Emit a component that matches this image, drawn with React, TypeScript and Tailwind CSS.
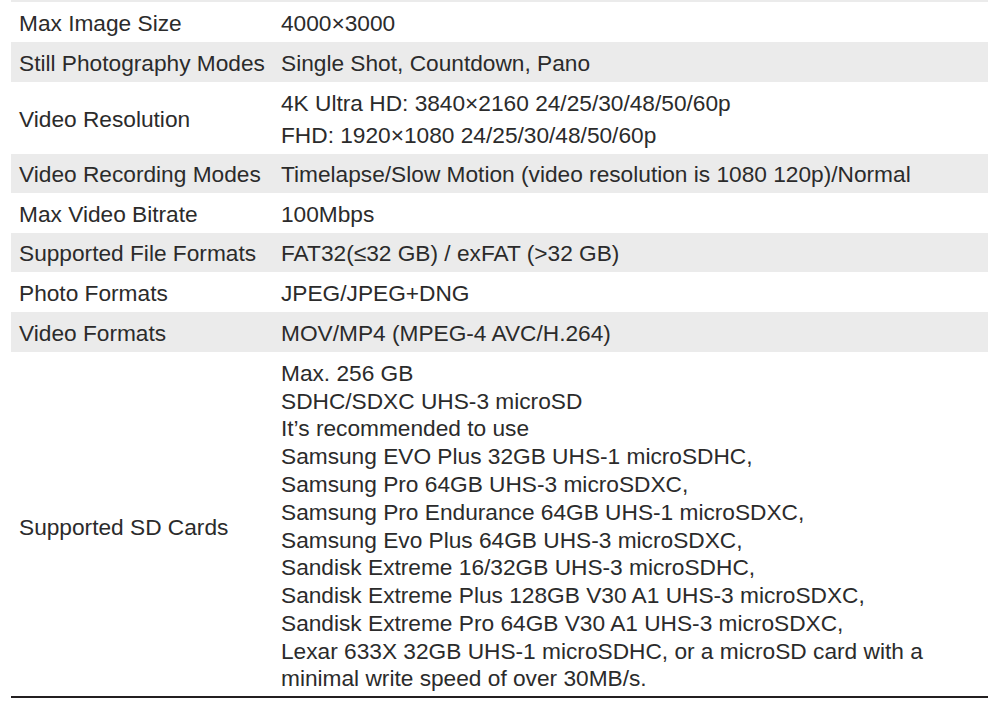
import React from 'react';

interface SpecRow {
    label: string;
    lines: string[];
    h: string;
    grey?: boolean;
    lead?: string;
}

const rows: SpecRow[] = [
    { label: 'Max Image Size', lines: ['4000×3000'], h: 'h-[40px]' },
    { label: 'Still Photography Modes', lines: ['Single Shot, Countdown, Pano'], h: 'h-[40px]', grey: true },
    {
        label: 'Video Resolution',
        lines: ['4K Ultra HD: 3840×2160 24/25/30/48/50/60p', 'FHD: 1920×1080 24/25/30/48/50/60p'],
        h: 'h-[72px]',
        lead: 'leading-[32px]',
    },
    { label: 'Video Recording Modes', lines: ['Timelapse/Slow Motion (video resolution is 1080 120p)/Normal'], h: 'h-[39px]', grey: true },
    { label: 'Max Video Bitrate', lines: ['100Mbps'], h: 'h-[40px]' },
    { label: 'Supported File Formats', lines: ['FAT32(≤32 GB) / exFAT (>32 GB)'], h: 'h-[39px]', grey: true },
    { label: 'Photo Formats', lines: ['JPEG/JPEG+DNG'], h: 'h-[40px]' },
    { label: 'Video Formats', lines: ['MOV/MP4 (MPEG-4 AVC/H.264)'], h: 'h-[40px]', grey: true },
    {
        label: 'Supported SD Cards',
        lines: [
            'Max. 256 GB',
            'SDHC/SDXC UHS-3 microSD',
            'It’s recommended to use',
            'Samsung EVO Plus 32GB UHS-1 microSDHC,',
            'Samsung Pro 64GB UHS-3 microSDXC,',
            'Samsung Pro Endurance 64GB UHS-1 microSDXC,',
            'Samsung Evo Plus 64GB UHS-3 microSDXC,',
            'Sandisk Extreme 16/32GB UHS-3 microSDHC,',
            'Sandisk Extreme Plus 128GB V30 A1 UHS-3 microSDXC,',
            'Sandisk Extreme Pro 64GB V30 A1 UHS-3 microSDXC,',
            'Lexar 633X 32GB UHS-1 microSDHC, or a microSD card with a',
            'minimal write speed of over 30MB/s.',
        ],
        h: 'h-[344px] pt-[4px]',
        lead: 'leading-[27.8px]',
    },
];

export default function App() {
    return (
        <div className="w-[996px] h-[705px] bg-white overflow-hidden font-['Liberation_Sans',Arial,sans-serif] text-[22.7px] text-[#2b2b2b]">
            <div className="mx-[11px] w-[977px]">
                {/* tail of the previous row */}
                <div className="h-[2px] bg-[#ebebeb]" />
                {rows.map((r) => (
                    <div
                        key={r.label}
                        className={`grid grid-cols-[270px_1fr] items-center ${r.h} ${r.grey ? 'bg-[#ebebeb]' : 'bg-white'}`}
                    >
                        <div className="pl-2 pt-[1px] whitespace-nowrap leading-[28px]">{r.label}</div>
                        <div className={`whitespace-nowrap pt-[1px] ${r.lead ?? 'leading-[28px]'}`}>
                            {r.lines.map((l) => (
                                <div key={l}>{l}</div>
                            ))}
                        </div>
                    </div>
                ))}
                <div className="h-[2px] bg-[#231f20]" />
            </div>
        </div>
    );
}
